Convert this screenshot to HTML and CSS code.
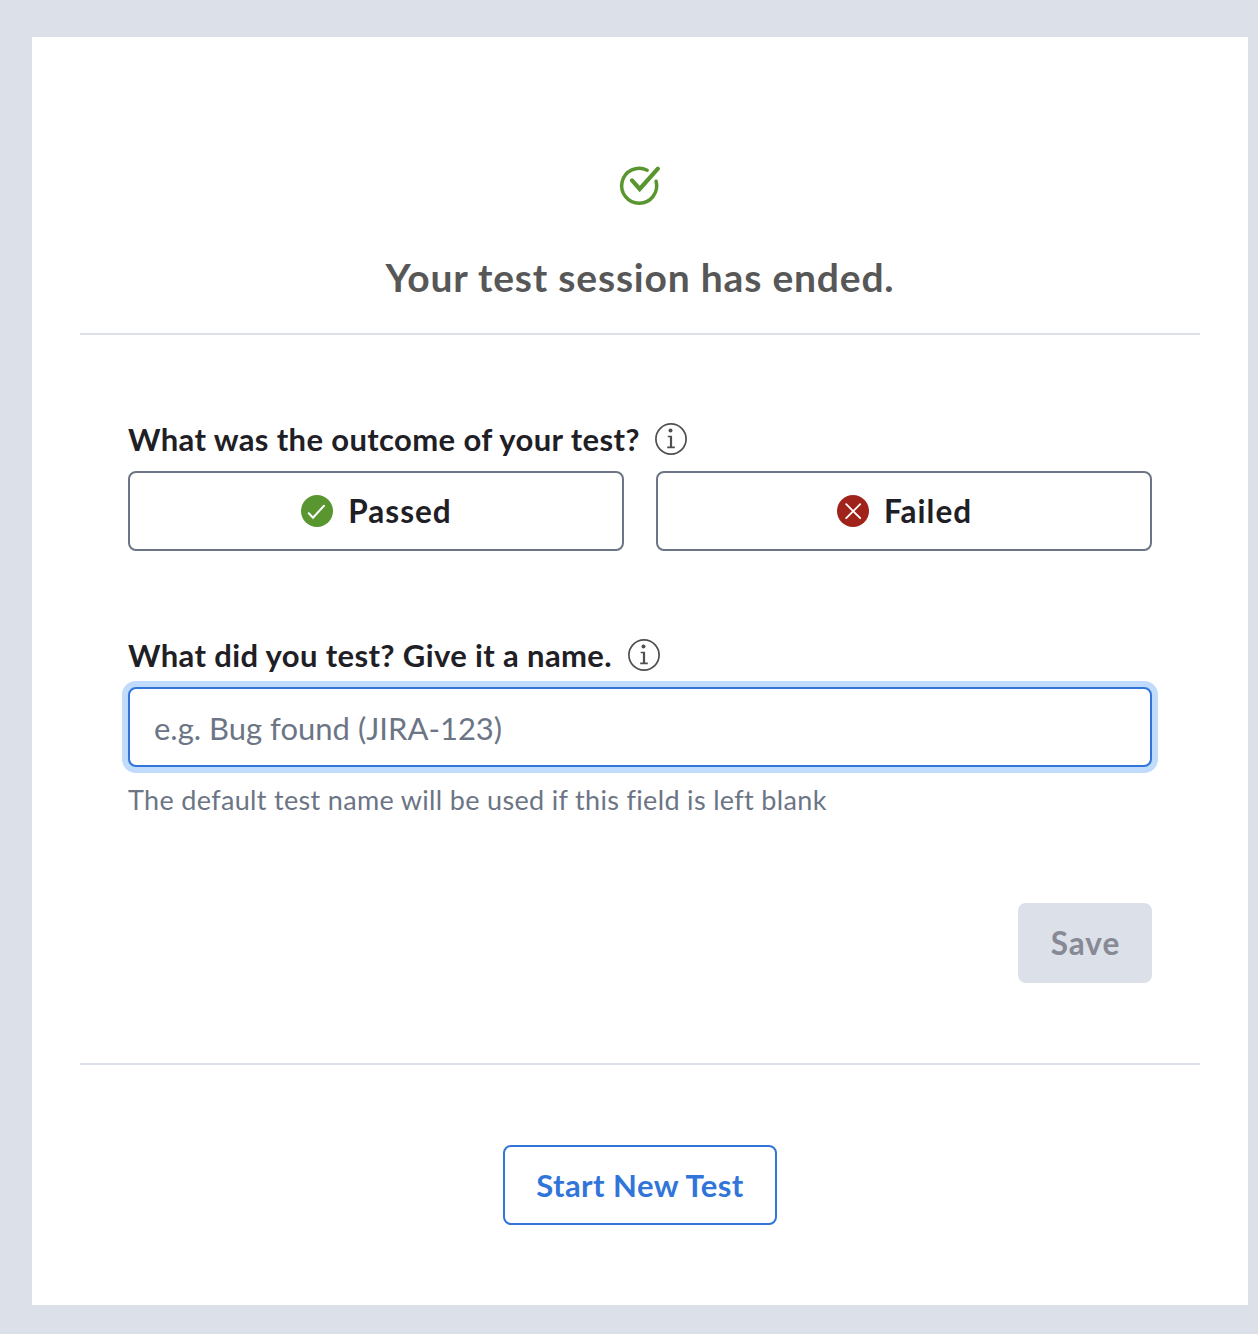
FILE: index.html
```html
<!DOCTYPE html>
<html lang="en">
<head>
<meta charset="utf-8">
<title>Test session</title>
<link rel="stylesheet" href="styles.css">
</head>
<body>
<svg class="sprite" aria-hidden="true">
  <symbol id="info" viewBox="0 0 32 32">
    <g fill="none" stroke="currentColor" stroke-width="1.7">
      <circle cx="16" cy="16" r="15.1"/>
      <path d="M12.7 13.5H16V24.4M12.2 24.4h7.6"/>
    </g>
    <path d="M16 13v11.4" stroke="currentColor" stroke-width="2.2"/>
    <circle cx="15.5" cy="7.6" r="2" fill="currentColor"/>
  </symbol>
</svg>
<main class="card">
  <header class="header">
    <svg class="done-icon" viewBox="0 0 44 44" fill="none" stroke="currentColor" stroke-linecap="round" stroke-linejoin="miter">
      <path stroke-width="3.5" d="M29.2 6.2A17.5 17.5 0 1 0 38.1 17.3"/>
      <path stroke-width="4.2" d="M14 16.4L21.7 25L39.9 4.7"/>
    </svg>
    <h1 class="title">Your test session has ended.</h1>
  </header>
  <form class="form">
    <div class="label-row"><span class="label label-outcome">What was the outcome of your test?</span><svg class="info"><use href="#info"/></svg></div>
    <div class="outcomes">
      <button type="button" class="button outcome">
        <svg class="status" viewBox="0 0 32 32" fill="none"><circle cx="16" cy="16" r="16" fill="#599630"/><path stroke="#fff" stroke-width="2" stroke-linecap="round" d="M7.8 18.3L12 22.7L23 10.7"/></svg>
        <span class="text">Passed</span>
      </button>
      <button type="button" class="button outcome">
        <svg class="status" viewBox="0 0 32 32" fill="none"><circle cx="16" cy="16" r="16" fill="#9f231b"/><path stroke="#fff" stroke-width="1.8" stroke-linecap="round" d="M9.2 9.2L23.2 23.2M23.2 9.2L9.2 23.2"/></svg>
        <span class="text">Failed</span>
      </button>
    </div>
    <div class="label-row name-row"><span class="label label-name">What did you test? Give it a name.</span><svg class="info"><use href="#info"/></svg></div>
    <input class="field" type="text" placeholder="e.g. Bug found (JIRA-123)">
    <p class="hint">The default test name will be used if this field is left blank</p>
    <button type="button" class="button save" disabled><span class="text">Save</span></button>
  </form>
  <footer class="footer">
    <button type="button" class="button start"><span class="text start-text">Start New Test</span></button>
  </footer>
</main>
</body>
</html>
```
FILE: styles.css
```css
* { box-sizing: border-box; }
body {
  margin: 0;
  min-height: 1334px;
  padding: 37px 10px 29px 32px;
  background: #dce0e9;
  color: #1f2026;
  font: 700 31px/32px Lato, "Liberation Sans", sans-serif;
}
.sprite { display: none; }
.card {
  height: 1268px;
  padding: 0 48px;
  background: #fff;
}
.header {
  height: 298px;
  padding-top: 127px;
  border-bottom: 2px solid #dcdfea;
  display: flex;
  flex-direction: column;
  align-items: center;
}
.done-icon { width: 44px; height: 44px; color: #599630; }
.title {
  margin: 45px 0 0;
  font-size: 39px;
  line-height: 48px;
  font-weight: 700;
  letter-spacing: 0.8px;
  color: #575757;
  white-space: nowrap;
}
.form {
  height: 730px;
  padding: 88px 48px 0;
  border-bottom: 2px solid #dce0e9;
  display: flex;
  flex-direction: column;
}
.label-row {
  display: flex;
  align-items: center;
  gap: 16px;
  height: 32px;
  margin-bottom: 16px;
  white-space: nowrap;
}
.label { letter-spacing: 0.37px; }
.label-outcome { width: 511px; }
.label-name { width: 484px; }
.info { width: 32px; height: 32px; color: #4f4f4f; }
.outcomes { display: grid; grid-template-columns: 1fr 1fr; gap: 32px; }
.button {
  height: 80px;
  padding: 0;
  border: 2px solid #6c7585;
  border-radius: 8px;
  background: #fff;
  color: inherit;
  font: inherit;
  display: flex;
  align-items: center;
  justify-content: center;
  white-space: nowrap;
}
.text { font-size: 31.5px; letter-spacing: 1px; margin-right: -1px; }
.start-text { font-size: 31px; letter-spacing: 0.45px; margin-right: 0; }
.outcome { gap: 15px; }
.status { width: 32px; height: 32px; }
.name-row { margin-top: 88px; }
.field {
  height: 80px;
  padding: 2px 24px 0;
  border: 2px solid #3275d9;
  border-radius: 8px;
  outline: none;
  background: #fff;
  box-shadow: 0 0 0 6px #c0dbfb;
  font: 400 31px/40px Lato, "Liberation Sans", sans-serif;
}
.field::placeholder { color: #6c7585; opacity: 1; }
.hint {
  margin: 17px 0 0;
  font-size: 27px;
  line-height: 32px;
  font-weight: 400;
  letter-spacing: 0.33px;
  color: #6c7585;
  white-space: nowrap;
}
.save {
  align-self: flex-end;
  width: 134px;
  margin-top: 87px;
  border: 0;
  background: #dce0e9;
  color: #878a94;
}
.footer { padding-top: 80px; display: flex; justify-content: center; }
.start { width: 274px; border-color: #3275d9; color: #3275d9; }
```
